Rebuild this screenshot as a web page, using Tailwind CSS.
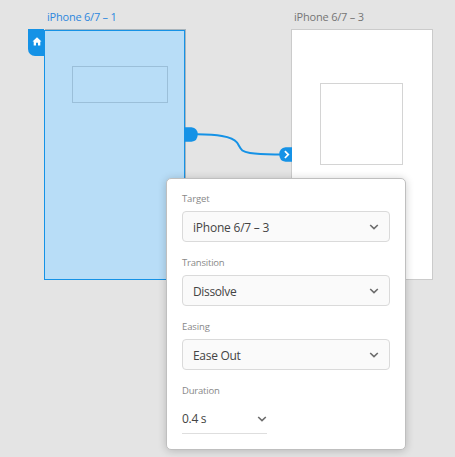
<!DOCTYPE html>
<html lang="en">
<head>
<meta charset="utf-8">
<title>Prototype</title>
<script src="https://cdn.jsdelivr.net/npm/@tailwindcss/browser@4"></script>
</head>
<body class="bg-[#e4e4e4]">
<main class="relative w-[455px] h-[457px] overflow-hidden bg-[#e4e4e4] font-['Open_Sans','Noto_Sans',sans-serif]">
  <!-- Artboards -->
  <div class="absolute left-[47px] top-[9px] text-[11px] leading-4 tracking-[-0.22px] whitespace-nowrap text-[#2d87de]">iPhone 6/7 – 1</div>
  <section class="absolute left-[44px] top-[30px] w-[141px] h-[250px] bg-[#b8ddf7] border border-[#1592e6] shadow-[1px_-1px_0_#a9b4bb] pl-[27px] pt-[35px]">
    <div class="w-[96px] h-[37px] border border-[#9bbfd9]"></div>
  </section>
  <div class="absolute left-[28px] top-[29px] w-[16px] h-[27px] rounded-bl-[7px] bg-[#1592e6] flex items-center justify-center">
    <svg class="w-[10px] h-[9px] mt-[-2px] ml-[1px]" viewBox="0 0 10 9"><path d="M5 0.2 9.5 4.6H8.3V8.6H6V5.8H4V8.6H1.7V4.6H0.5Z" fill="#fff"/></svg>
  </div>

  <div class="absolute left-[294px] top-[9px] text-[11px] leading-4 tracking-[-0.2px] whitespace-nowrap text-[#757575]">iPhone 6/7 – 3</div>
  <section class="absolute left-[291px] top-[29px] w-[142px] h-[251px] bg-white border border-[#cbcbcb] pl-[28px] pt-[53px]">
    <div class="w-[83px] h-[82px] border border-[#d4d4d4]"></div>
  </section>

  <!-- Connection wire -->
  <svg class="absolute left-[184px] top-[120px] w-[110px] h-[48px]" viewBox="184 120 110 48">
    <path d="M197 134.2C215 134.6 232 135.6 237 142.5C241 148.5 240 151.5 250 153C260 154.5 270 154.3 281 154.5" fill="none" stroke="#1592e6" stroke-width="2"/>
    <path d="M184 127.3H191.5Q197.7 128 197.7 134.5Q197.7 141 191.5 141.7H184Z" fill="#1592e6"/>
    <path d="M292 147.3H285.5Q279.3 148 279.3 154.5Q279.3 161 285.5 161.7H292Z" fill="#1592e6"/>
    <path d="M284.9 151.2 288.3 154.6 284.9 158" fill="none" stroke="#fff" stroke-width="1.7"/>
  </svg>

  <!-- Transition popover -->
  <section class="absolute left-[166px] top-[178px] w-[240px] h-[272px] rounded-[5px] border border-[#bfbfbf] bg-white shadow-[0_1px_9px_rgba(0,0,0,0.2)] px-[15px] pt-[12px] flex flex-col">
    <div class="h-[64px]">
      <div class="h-[20px] text-[9.5px] leading-4 tracking-[-0.15px] text-[#888]">Target</div>
      <div class="w-[208px] h-[31px] rounded-[4px] border border-[#dadada] bg-[#fafafa] flex items-center justify-between pl-[10px] pr-[10px]">
        <span class="text-[12px] leading-4 tracking-[-0.22px] text-[#444] pt-[3px]">iPhone 6/7 – 3</span>
        <svg class="w-[10px] h-[6px] mt-px" viewBox="0 0 10 6"><path d="M1.2 1 5 4.6 8.8 1" fill="none" stroke="#6c6c6c" stroke-width="1.6"/></svg>
      </div>
    </div>
    <div class="h-[64px]">
      <div class="h-[20px] text-[9.5px] leading-4 tracking-[-0.2px] text-[#888]">Transition</div>
      <div class="w-[208px] h-[31px] rounded-[4px] border border-[#dadada] bg-[#fafafa] flex items-center justify-between pl-[10px] pr-[10px]">
        <span class="text-[12px] leading-4 tracking-[-0.36px] text-[#444] pt-[3px]">Dissolve</span>
        <svg class="w-[10px] h-[6px] mt-px" viewBox="0 0 10 6"><path d="M1.2 1 5 4.6 8.8 1" fill="none" stroke="#6c6c6c" stroke-width="1.6"/></svg>
      </div>
    </div>
    <div class="h-[64px]">
      <div class="h-[20px] text-[9.5px] leading-4 tracking-[-0.1px] text-[#888]">Easing</div>
      <div class="w-[208px] h-[31px] rounded-[4px] border border-[#dadada] bg-[#fafafa] flex items-center justify-between pl-[10px] pr-[10px]">
        <span class="text-[12px] leading-4 tracking-[-0.3px] text-[#444] pt-[3px]">Ease Out</span>
        <svg class="w-[10px] h-[6px] mt-px" viewBox="0 0 10 6"><path d="M1.2 1 5 4.6 8.8 1" fill="none" stroke="#6c6c6c" stroke-width="1.6"/></svg>
      </div>
    </div>
    <div>
      <div class="h-[20px] text-[9.5px] leading-4 tracking-[-0.2px] text-[#888]">Duration</div>
      <div class="w-[85px] h-[31px] border-b border-[#dedede] flex items-center justify-between">
        <span class="text-[12px] leading-4 tracking-[-0.3px] text-[#444] pt-[2px]">0.4 s</span>
        <svg class="w-[10px] h-[6px] mt-px" viewBox="0 0 10 6"><path d="M1.2 1 5 4.6 8.8 1" fill="none" stroke="#6c6c6c" stroke-width="1.6"/></svg>
      </div>
    </div>
  </section>
</main>
</body>
</html>
